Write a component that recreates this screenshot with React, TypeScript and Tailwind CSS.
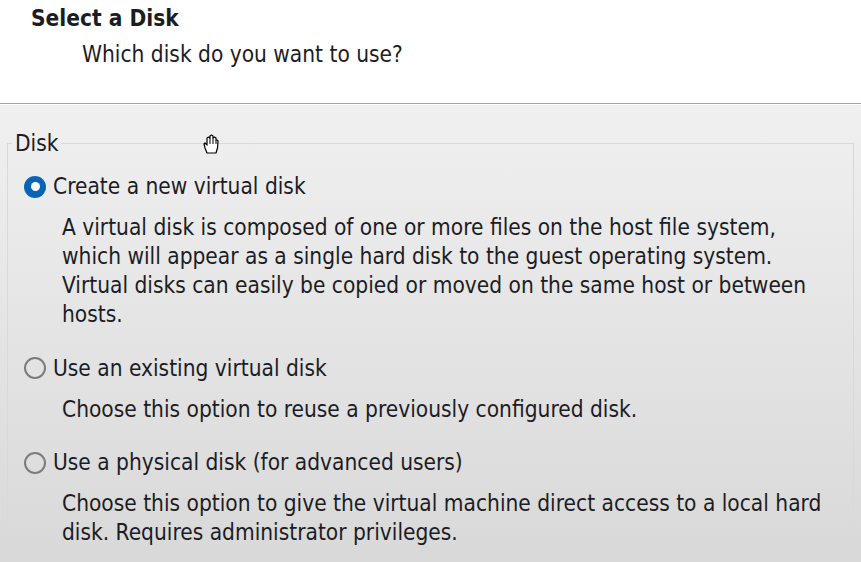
export default function App() {
  const options = [
    {
      label: "Create a new virtual disk",
      checked: true,
      desc: [
        "A virtual disk is composed of one or more files on the host file system,",
        "which will appear as a single hard disk to the guest operating system.",
        "Virtual disks can easily be copied or moved on the same host or between",
        "hosts.",
      ],
    },
    {
      label: "Use an existing virtual disk",
      checked: false,
      desc: ["Choose this option to reuse a previously configured disk."],
    },
    {
      label: "Use a physical disk (for advanced users)",
      checked: false,
      desc: [
        "Choose this option to give the virtual machine direct access to a local hard",
        "disk. Requires administrator privileges.",
      ],
    },
  ];

  return (
    <div
      className="relative w-[861px] h-[562px] overflow-hidden flex flex-col text-[#1c1c24] text-[22.5px] leading-[29px]"
      style={{ fontFamily: '"DejaVu Sans Condensed", "DejaVu Sans", sans-serif' }}
    >
      {/* header */}
      <div className="h-[104px] shrink-0 bg-white pl-[31px] pt-[4px] border-b border-[#a3a3a3]">
        <div className="font-bold">Select a Disk</div>
        <div className="pl-[51px] mt-[7px]">Which disk do you want to use?</div>
      </div>

      {/* body */}
      <div className="flex-1 bg-gradient-to-b from-[#f0f0f0] to-[#d0d0d0] border-t border-white pl-[7px] pr-[7px] pt-[24px]">
        <fieldset className="border border-[#d9d9d9] h-[600px]">
          <legend className="ml-[4px] px-[3px] leading-[29px]">Disk</legend>
          <div className="flex flex-col gap-[24.5px] pl-[16px] pt-[14px]">
            {options.map((o) => (
              <div key={o.label}>
                <label className="flex items-center gap-[7px] h-[29px]">
                  {o.checked ? (
                    <span className="w-[22px] h-[22px] rounded-full bg-[#0a64b4] flex items-center justify-center">
                      <span className="w-[9px] h-[9px] rounded-full bg-white" />
                    </span>
                  ) : (
                    <span className="w-[22px] h-[22px] rounded-full border-[2px] border-[#7c7c7c] bg-transparent" />
                  )}
                  <span>{o.label}</span>
                </label>
                <div className="mt-[12px] pl-[38px]">
                  {o.desc.map((d) => (
                    <div key={d}>{d}</div>
                  ))}
                </div>
              </div>
            ))}
          </div>
        </fieldset>
      </div>

      {/* mouse cursor (hand) */}
      <svg
        className="absolute left-[203px] top-[134px]"
        width="16"
        height="20"
        viewBox="0 0 16 20"
      >
        <path
          d="M4 19 L2 14 L1 10 L2 9 L4 11 L4 4 L5.5 3 L7 4 L7 2 L8.5 1 L10 2 L10 4 L11.5 3 L13 4 L13 6 L14 6 L15 7 L14.5 14 L13 19 Z"
          fill="white"
          stroke="black"
          strokeWidth="1.2"
          strokeLinejoin="round"
        />
        <path d="M7 4 L7 10 M10 4 L10 10 M13 6 L13 10" stroke="black" strokeWidth="1" fill="none" />
      </svg>
    </div>
  );
}
